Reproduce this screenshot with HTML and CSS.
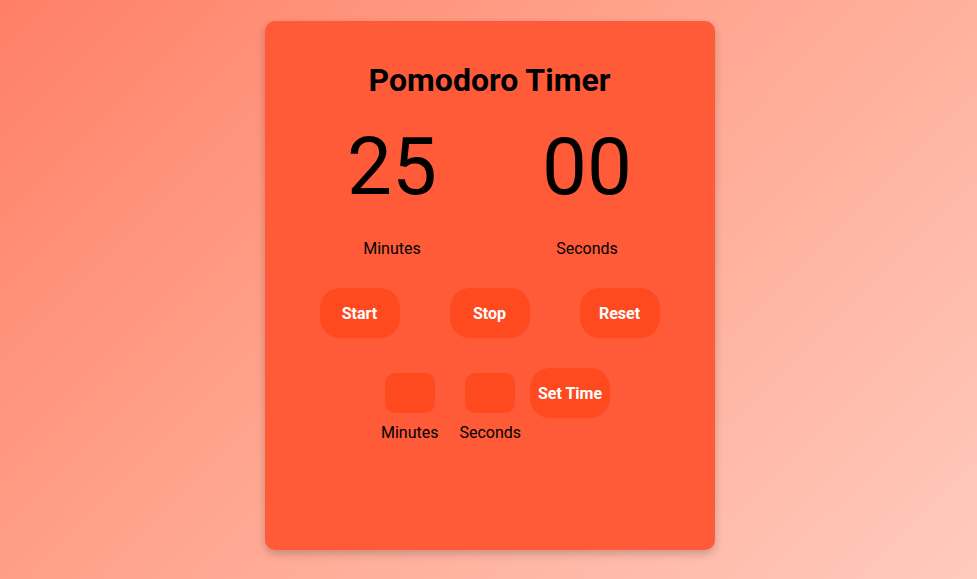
FILE: index.html
```html
<!DOCTYPE html>
<html lang="en">
<head>
<meta charset="utf-8">
<title>Pomodoro Timer</title>
<link rel="stylesheet" href="styles.css">
</head>
<body>
<main class="card">
  <h1 class="title">Pomodoro Timer</h1>
  <div class="display">
    <div class="unit">
      <div class="digits">25</div>
      <div class="unit-label">Minutes</div>
    </div>
    <div class="unit">
      <div class="digits">00</div>
      <div class="unit-label">Seconds</div>
    </div>
  </div>
  <div class="controls">
    <button class="btn">Start</button>
    <button class="btn">Stop</button>
    <button class="btn">Reset</button>
  </div>
  <div class="setter">
    <label class="field">
      <input class="field-input" type="number">
      <span class="field-label">Minutes</span>
    </label>
    <label class="field field-second">
      <input class="field-input" type="number">
      <span class="field-label">Seconds</span>
    </label>
    <button class="btn">Set Time</button>
  </div>
</main>
</body>
</html>
```
FILE: styles.css
```css
html, body {
  margin: 0;
  height: 100%;
}
body {
  background: linear-gradient(135deg, #ff7f66 0%, #ffa58f 45%, #ffcabd 100%);
  font-family: Roboto, "Liberation Sans", sans-serif;
  color: #000;
  display: flex;
  justify-content: center;
  align-items: flex-start;
  padding-top: 21px;
  padding-left: 2px;
  box-sizing: border-box;
}
.card {
  width: 450px;
  height: 529px;
  box-sizing: border-box;
  background: #ff5b38;
  border-radius: 10px;
  box-shadow: 0 4px 8px rgba(0, 0, 0, 0.2);
  padding: 20px;
  display: flex;
  flex-direction: column;
  align-items: center;
}
.title {
  font-size: 32px;
  font-weight: 700;
  margin: 21px 0 21px;
  line-height: 37px;
}
.display {
  display: flex;
  gap: 75px;
}
.unit {
  width: 120px;
  display: flex;
  flex-direction: column;
  align-items: center;
}
.digits {
  font-size: 80px;
  line-height: 94px;
}
.unit-label {
  font-size: 16px;
  line-height: 19px;
  margin-top: 25px;
}
.controls {
  display: flex;
  gap: 50px;
  margin-top: 30px;
}
.btn {
  width: 80px;
  height: 50px;
  padding: 0;
  border: none;
  border-radius: 20px;
  background: #ff4a1f;
  color: #fff;
  font-family: Roboto, "Liberation Sans", sans-serif;
  font-size: 16px;
  font-weight: 700;
}
.setter {
  display: flex;
  align-items: flex-start;
  margin-top: 30px;
  margin-left: 2px;
}
.field {
  display: flex;
  flex-direction: column;
  align-items: center;
  margin: 5px 10px 0;
}
.field-second {
  margin-left: 11px;
  margin-right: 9px;
}
.field-input {
  width: 50px;
  height: 40px;
  box-sizing: border-box;
  border: none;
  border-radius: 10px;
  background: #ff4a1f;
  padding: 0;
}
.field-label {
  font-size: 16px;
  line-height: 19px;
  margin-top: 10px;
}
```
